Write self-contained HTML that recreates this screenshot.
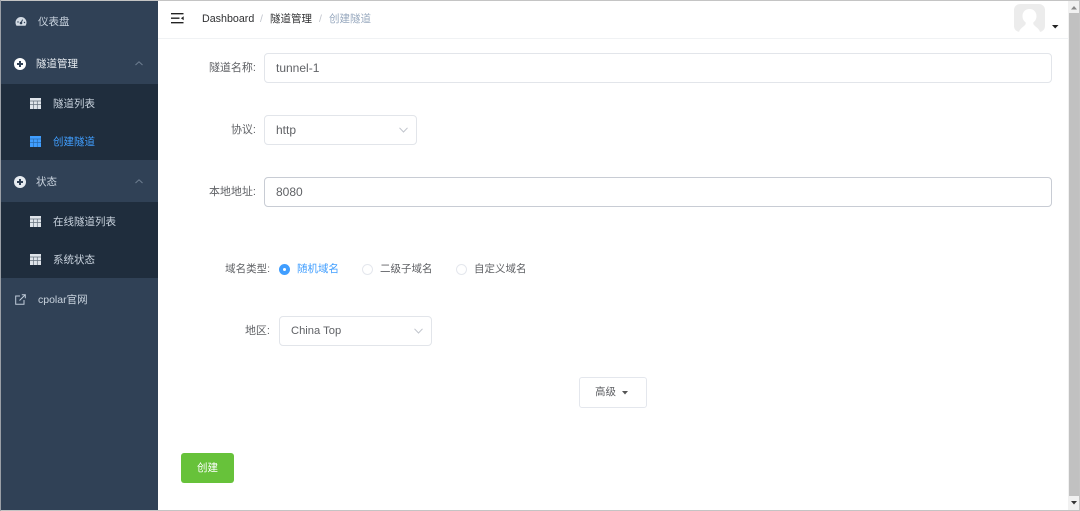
<!DOCTYPE html>
<html><head><meta charset="utf-8"><style>
html,body{margin:0;padding:0;width:1080px;height:511px;overflow:hidden;background:#fff}
body{position:relative;font-family:"Liberation Sans","Noto Sans CJK SC",sans-serif;font-size:11px;color:#606266}
.a{position:absolute;white-space:nowrap}
.side{position:absolute;left:0;top:0;width:158px;height:511px;background:#304156}
.sub{position:absolute;left:0;width:158px;background:#1f2d3d}
.m{position:absolute;white-space:nowrap;color:#c9d3de;line-height:16px;font-size:10.5px}
.box{position:absolute;box-sizing:border-box;border:1px solid #e2e5ea;border-radius:4px;background:#fff;font-size:12px;line-height:28px;color:#606266;padding-left:11px}
.l{position:absolute;text-align:right;font-size:10.5px;color:#606266;line-height:16px;white-space:nowrap}
.r{position:absolute;box-sizing:border-box;width:11px;height:11px;border:1px solid #e4e7ed;border-radius:50%;background:#fff}
svg{position:absolute;overflow:visible}
</style></head><body>
<div class="side"></div>
<div class="sub" style="top:84px;height:76px"></div>
<div class="sub" style="top:202px;height:76px"></div>

<svg style="left:15px;top:16px" width="12" height="11" viewBox="0 0 12 11"><path d="M6 1a5.500 5.500 0 0 0-5.500 5.500c0 1.300.4 2.400 1 3.200h9c.6-.8 1-1.900 1-3.200A5.500 5.500 0 0 0 6 1z" fill="#d3dbe4"/><circle cx="6" cy="7" r="1.300" fill="#304156"/><path d="M6 7l1.600-3.400" stroke="#304156"/><circle cx="3" cy="6" r=".7" fill="#304156"/><circle cx="9.500" cy="6.500" r=".7" fill="#304156"/></svg>
<div class="m" style="left:38px;top:14px">仪表盘</div>

<svg style="left:14px;top:58px" width="12" height="12"><circle cx="6" cy="6" r="6" fill="#fff"/><path d="M3 6h6M6 3v6" stroke="#304156" stroke-width="2"/></svg>
<div class="m" style="left:36px;top:56px;color:#e6ebf0">隧道管理</div>
<svg style="left:135px;top:61px" width="8" height="5"><path d="M.5 4L4 .8 7.500 4" fill="none" stroke="#6f7f92"/></svg>

<svg style="left:30px;top:98px" width="11" height="11"><rect width="11" height="11" fill="#dfe4ea"/><path d="M0 3h11M0 6.500h11M3.600 3v8M7.300 3v8" stroke="#66717e" stroke-width=".7"/></svg>
<div class="m" style="left:53px;top:96px">隧道列表</div>
<svg style="left:30px;top:136px" width="11" height="11"><rect width="11" height="11" fill="#409eff"/><path d="M0 3h11M0 6.500h11M3.600 3v8M7.300 3v8" stroke="#2a6cb0" stroke-width=".7"/></svg>
<div class="m" style="left:53px;top:134px;color:#409eff">创建隧道</div>

<svg style="left:14px;top:176px" width="12" height="12"><circle cx="6" cy="6" r="6" fill="#e6ebf0"/><path d="M3 6h6M6 3v6" stroke="#304156" stroke-width="2"/></svg>
<div class="m" style="left:36px;top:174px">状态</div>
<svg style="left:135px;top:179px" width="8" height="5"><path d="M.5 4L4 .8 7.500 4" fill="none" stroke="#6f7f92"/></svg>

<svg style="left:30px;top:216px" width="11" height="11"><rect width="11" height="11" fill="#dfe4ea"/><path d="M0 3h11M0 6.500h11M3.600 3v8M7.300 3v8" stroke="#66717e" stroke-width=".7"/></svg>
<div class="m" style="left:53px;top:214px">在线隧道列表</div>
<svg style="left:30px;top:254px" width="11" height="11"><rect width="11" height="11" fill="#dfe4ea"/><path d="M0 3h11M0 6.500h11M3.600 3v8M7.300 3v8" stroke="#66717e" stroke-width=".7"/></svg>
<div class="m" style="left:53px;top:252px">系统状态</div>

<svg style="left:15px;top:294px" width="11" height="11"><path d="M5 2H.7v8.300H9V6M4.500 6.500L10 1M6.800.7h3.500v3.500" fill="none" stroke="#bfcbd9"/></svg>
<div class="m" style="left:38px;top:292px">cpolar官网</div>

<!-- header -->
<div class="a" style="left:158px;top:38px;width:910px;height:1px;background:#f0f2f4"></div>
<svg style="left:171px;top:13px" width="13" height="11"><path d="M0 .7h12.500M0 5.200h8.500M0 9.700h12.500" stroke="#222" stroke-width="1.300"/><path d="M12.700 3.200v4l-2.800-2z" fill="#222"/></svg>
<div class="a" style="left:202px;top:11px;line-height:16px;font-size:10.700px;color:#303133">Dashboard</div>
<div class="a" style="left:260px;top:11px;line-height:16px;font-size:10.500px;color:#c0c4cc">/</div>
<div class="a" style="left:270px;top:11px;line-height:16px;font-size:10.500px;color:#303133">隧道管理</div>
<div class="a" style="left:319px;top:11px;line-height:16px;font-size:10.500px;color:#c0c4cc">/</div>
<div class="a" style="left:329px;top:11px;line-height:16px;font-size:10.500px;color:#97a8be">创建隧道</div>

<svg style="left:1014px;top:4px" width="31" height="28"><rect width="31" height="28" rx="6" fill="#ececec"/><path d="M15.500 5c-4.200 0-7 3-7 7 0 3 1.300 5 3.200 6.500V20C10 23 6 24 5 28h21c-1-4-5-5-6.700-8v-1.500c1.900-1.500 3.200-3.500 3.200-6.500 0-4-2.800-7-7-7z" fill="#fff"/></svg>
<svg style="left:1052px;top:25px" width="7" height="4"><path d="M0 0h6.500L3.200 3.500z" fill="#222"/></svg>

<!-- form -->
<div class="l" style="left:180px;width:76px;top:60px;font-size:11px">隧道名称:</div>
<div class="box" style="left:264px;top:53px;width:788px;height:30px">tunnel-1</div>

<div class="l" style="left:180px;width:76px;top:122px;font-size:11px">协议:</div>
<div class="box" style="left:264px;top:115px;width:153px;height:30px">http</div>
<svg style="left:399px;top:127px" width="9" height="6"><path d="M.5.800L4.500 5 8.500.8" fill="none" stroke="#c0c4cc"/></svg>

<div class="l" style="left:180px;width:76px;top:184px;font-size:11px">本地地址:</div>
<div class="box" style="left:264px;top:177px;width:788px;height:30px;border-color:#c8ccd4">8080</div>

<div class="l" style="left:190px;width:80px;top:261px">域名类型:</div>
<div class="r" style="left:279px;top:264px;background:#409eff;border-color:#409eff"></div>
<div class="a" style="left:283px;top:268px;width:3px;height:3px;border-radius:50%;background:#fff"></div>
<div class="a" style="left:297px;top:261px;font-size:10.500px;line-height:16px;color:#409eff">随机域名</div>
<div class="r" style="left:362px;top:264px"></div>
<div class="a" style="left:380px;top:261px;font-size:10.500px;line-height:16px">二级子域名</div>
<div class="r" style="left:456px;top:264px"></div>
<div class="a" style="left:474px;top:261px;font-size:10.500px;line-height:16px">自定义域名</div>

<div class="l" style="left:190px;width:80px;top:323px;font-size:11px">地区:</div>
<div class="box" style="left:279px;top:316px;width:153px;height:30px;font-size:11.200px">China Top</div>
<svg style="left:414px;top:328px" width="9" height="6"><path d="M.5.800L4.500 5 8.500.8" fill="none" stroke="#c0c4cc"/></svg>

<div class="a" style="box-sizing:border-box;left:579px;top:377px;width:68px;height:31px;border:1px solid #e4e7ed;border-radius:3px;background:#fff"></div>
<div class="a" style="left:595px;top:384px;font-size:10.500px;line-height:16px">高级</div>
<svg style="left:622px;top:391px" width="6" height="4"><path d="M0 0h6L3 3.500z" fill="#555"/></svg>

<div class="a" style="left:181px;top:453px;width:53px;height:30px;border-radius:3px;background:#67c23a;color:#fff;text-align:center;line-height:30px;font-size:10.500px">创建</div>

<!-- scrollbar -->
<div class="a" style="left:1068px;top:0;width:12px;height:511px;background:#f1f1f1"></div>
<div class="a" style="left:1069px;top:13px;width:10px;height:483px;background:#c1c1c1"></div>
<svg style="left:1071px;top:6px" width="6" height="4"><path d="M3 0l3 3.500H0z" fill="#888"/></svg>
<svg style="left:1071px;top:501px" width="6" height="4"><path d="M0 0h6L3 3.500z" fill="#333"/></svg>

<!-- frame -->
<div class="a" style="left:0;top:0;width:1080px;height:1px;background:#c4c4c4"></div>
<div class="a" style="left:0;top:510px;width:1080px;height:1px;background:#c4c4c4"></div>
<div class="a" style="left:0;top:0;width:1px;height:511px;background:#9a9fa6"></div>
<div class="a" style="left:1079px;top:0;width:1px;height:511px;background:#c4c4c4"></div>
</body></html>
